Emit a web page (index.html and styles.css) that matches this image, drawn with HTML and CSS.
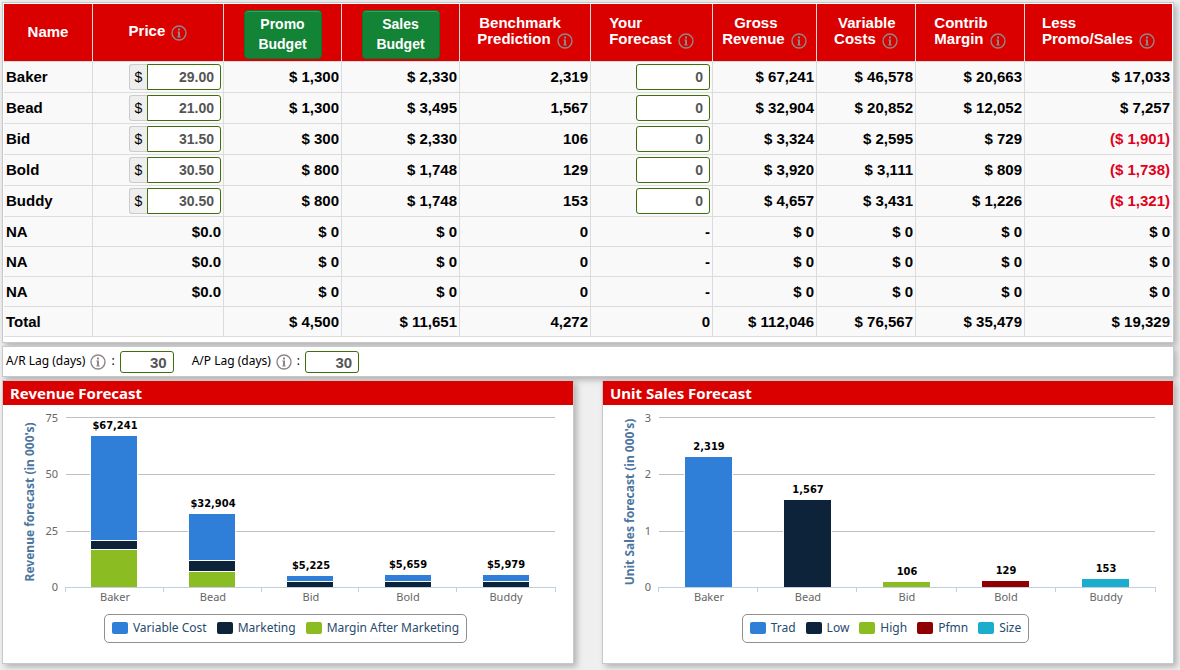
FILE: index.html
```html
<!DOCTYPE html>
<html lang="en">
<head>
<meta charset="utf-8">
<meta name="viewport" content="width=device-width, initial-scale=1">
<title>Marketing Forecast</title>
<link rel="stylesheet" href="styles.css">
</head>
<body>
<svg class="sprite" aria-hidden="true">
  <symbol id="info" viewBox="0 0 16 16">
    <circle cx="8" cy="8" r="7" fill="none" stroke="currentColor" stroke-width="1.4"/>
    <path d="M7 3.500h2v2H7zM7 6.500h2v5.500H7zM6.300 6.500H8v1H6.300zM6.300 11.500h3.400v1H6.300z" fill="currentColor"/>
  </symbol>
</svg>
<main class="page">
  <section class="panel table-panel">
    <table class="forecast">
      <colgroup>
        <col class="c-name"><col class="c-price"><col class="c-budget"><col class="c-budget"><col class="c-bench"><col class="c-your"><col class="c-gross"><col class="c-var"><col class="c-contrib"><col class="c-less">
      </colgroup>
      <thead>
        <tr>
          <th scope="col">Name</th>
          <th scope="col"><span class="label">Price <svg class="info"><use href="#info"/></svg></span></th>
          <th scope="col" class="action"><button type="button" class="btn">Promo<br>Budget</button></th>
          <th scope="col" class="action"><button type="button" class="btn">Sales<br>Budget</button></th>
          <th scope="col"><span class="label"><span class="indent-sm">Benchmark</span><br>Prediction <svg class="info"><use href="#info"/></svg></span></th>
          <th scope="col"><span class="label">Your<br>Forecast <svg class="info"><use href="#info"/></svg></span></th>
          <th scope="col"><span class="label"><span class="indent-lg">Gross</span><br>Revenue <svg class="info"><use href="#info"/></svg></span></th>
          <th scope="col"><span class="label"><span class="indent">Variable</span><br>Costs <svg class="info"><use href="#info"/></svg></span></th>
          <th scope="col"><span class="label">Contrib<br>Margin <svg class="info"><use href="#info"/></svg></span></th>
          <th scope="col"><span class="label">Less<br>Promo/Sales <svg class="info"><use href="#info"/></svg></span></th>
        </tr>
      </thead>
      <tbody>
        <tr class="product"><th scope="row">Baker</th><td><label class="money"><span class="addon">$</span><input class="field" type="text" aria-label="Baker price" value="29.00"></label></td><td>$ 1,300</td><td>$ 2,330</td><td>2,319</td><td><input class="field" type="text" aria-label="Baker forecast" value="0"></td><td>$ 67,241</td><td>$ 46,578</td><td>$ 20,663</td><td>$ 17,033</td></tr>
        <tr class="product"><th scope="row">Bead</th><td><label class="money"><span class="addon">$</span><input class="field" type="text" aria-label="Bead price" value="21.00"></label></td><td>$ 1,300</td><td>$ 3,495</td><td>1,567</td><td><input class="field" type="text" aria-label="Bead forecast" value="0"></td><td>$ 32,904</td><td>$ 20,852</td><td>$ 12,052</td><td>$ 7,257</td></tr>
        <tr class="product"><th scope="row">Bid</th><td><label class="money"><span class="addon">$</span><input class="field" type="text" aria-label="Bid price" value="31.50"></label></td><td>$ 300</td><td>$ 2,330</td><td>106</td><td><input class="field" type="text" aria-label="Bid forecast" value="0"></td><td>$ 3,324</td><td>$ 2,595</td><td>$ 729</td><td class="negative">($ 1,901)</td></tr>
        <tr class="product"><th scope="row">Bold</th><td><label class="money"><span class="addon">$</span><input class="field" type="text" aria-label="Bold price" value="30.50"></label></td><td>$ 800</td><td>$ 1,748</td><td>129</td><td><input class="field" type="text" aria-label="Bold forecast" value="0"></td><td>$ 3,920</td><td>$ 3,111</td><td>$ 809</td><td class="negative">($ 1,738)</td></tr>
        <tr class="product"><th scope="row">Buddy</th><td><label class="money"><span class="addon">$</span><input class="field" type="text" aria-label="Buddy price" value="30.50"></label></td><td>$ 800</td><td>$ 1,748</td><td>153</td><td><input class="field" type="text" aria-label="Buddy forecast" value="0"></td><td>$ 4,657</td><td>$ 3,431</td><td>$ 1,226</td><td class="negative">($ 1,321)</td></tr>
        <tr><th scope="row">NA</th><td>$0.0</td><td>$ 0</td><td>$ 0</td><td>0</td><td>-</td><td>$ 0</td><td>$ 0</td><td>$ 0</td><td>$ 0</td></tr>
        <tr><th scope="row">NA</th><td>$0.0</td><td>$ 0</td><td>$ 0</td><td>0</td><td>-</td><td>$ 0</td><td>$ 0</td><td>$ 0</td><td>$ 0</td></tr>
        <tr><th scope="row">NA</th><td>$0.0</td><td>$ 0</td><td>$ 0</td><td>0</td><td>-</td><td>$ 0</td><td>$ 0</td><td>$ 0</td><td>$ 0</td></tr>
      </tbody>
      <tfoot>
        <tr><th scope="row">Total</th><td></td><td>$ 4,500</td><td>$ 11,651</td><td>4,272</td><td>0</td><td>$ 112,046</td><td>$ 76,567</td><td>$ 35,479</td><td>$ 19,329</td></tr>
      </tfoot>
    </table>
  </section>

  <section class="panel lags">
    <div class="lag"><label for="ar">A/R Lag (days)</label><svg class="info"><use href="#info"/></svg><span>:</span><input class="field lag-field" id="ar" type="text" value="30"></div>
    <div class="lag"><label for="ap">A/P Lag (days)</label><svg class="info"><use href="#info"/></svg><span>:</span><input class="field lag-field" id="ap" type="text" value="30"></div>
  </section>

  <div class="charts">
    <section class="panel chart-panel">
      <h2 class="chart-title">Revenue Forecast</h2>
      <svg class="chart" viewBox="0 0 570 200" role="img" aria-label="Revenue forecast in thousands">
        <path class="grid" d="M63 12.5H552M63 69.5H552M63 126.5H552"/>
        <g class="bars">
          <path class="blue" d="M87.5 30.5h47v105h-47zM185.500 108.500h47v47h-47zM283.500 170.500h47v6h-47zM381.500 169.500h47v7h-47zM479.500 169.500h47v7h-47z"/>
          <path class="navy" d="M87.500 135.500h47v9h-47zM185.500 155.500h47v11h-47zM283.500 176.500h47v6h-47zM381.500 176.500h47v6h-47zM479.500 176.500h47v6h-47z"/>
          <path class="green" d="M87.500 144.500h47v38h-47zM185.500 166.500h47v16h-47z"/>
        </g>
        <path class="axis" d="M62 182.500H553M62.500 182v5M160.500 182v5M258.500 182v5M355.500 182v5M453.500 182v5M552.500 182v5"/>
        <g class="y-labels"><text x="55" y="17">75</text><text x="55" y="73">50</text><text x="55" y="130">25</text><text x="55" y="186">0</text></g>
        <g class="x-labels"><text x="112" y="196">Baker</text><text x="210" y="196">Bead</text><text x="308" y="196">Bid</text><text x="405" y="196">Bold</text><text x="503" y="196">Buddy</text></g>
        <g class="values"><text x="112" y="24">$67,241</text><text x="210" y="102">$32,904</text><text x="308" y="164">$5,225</text><text x="405" y="163">$5,659</text><text x="503" y="163">$5,979</text></g>
        <text class="y-title" transform="translate(31 97) rotate(-90)">Revenue forecast (in 000's)</text>
      </svg>
      <div class="legend-row">
        <ul class="legend">
          <li><i class="swatch blue"></i>Variable Cost</li><li><i class="swatch navy"></i>Marketing</li><li><i class="swatch green"></i>Margin After Marketing</li>
        </ul>
      </div>
    </section>

    <section class="panel chart-panel">
      <h2 class="chart-title">Unit Sales Forecast</h2>
      <svg class="chart" viewBox="0 0 570 200" role="img" aria-label="Unit sales forecast in thousands">
        <path class="grid" d="M56 12.500H552M56 69.500H552M56 126.500H552"/>
        <g class="bars">
          <path class="blue" d="M81.500 51.500h48v131h-48z"/>
          <path class="navy" d="M180.500 94.500h48v88h-48z"/>
          <path class="green" d="M279.500 176.500h48v6h-48z"/>
          <path class="maroon" d="M378.500 175.500h48v7h-48z"/>
          <path class="cyan" d="M478.500 173.500h48v9h-48z"/>
        </g>
        <path class="axis" d="M55 182.500H553M55.500 182v5M154.500 182v5M253.500 182v5M353.500 182v5M452.500 182v5M552.500 182v5"/>
        <g class="y-labels"><text x="48" y="17">3</text><text x="48" y="73">2</text><text x="48" y="130">1</text><text x="48" y="186">0</text></g>
        <g class="x-labels"><text x="106" y="196">Baker</text><text x="205" y="196">Bead</text><text x="304" y="196">Bid</text><text x="403" y="196">Bold</text><text x="503" y="196">Buddy</text></g>
        <g class="values"><text x="106" y="45">2,319</text><text x="205" y="88">1,567</text><text x="304" y="170">106</text><text x="403" y="169">129</text><text x="503" y="167">153</text></g>
        <text class="y-title" transform="translate(31 97) rotate(-90)">Unit Sales forecast (in 000's)</text>
      </svg>
      <div class="legend-row">
        <ul class="legend">
          <li><i class="swatch blue"></i>Trad</li><li><i class="swatch navy"></i>Low</li><li><i class="swatch green"></i>High</li><li><i class="swatch maroon"></i>Pfmn</li><li><i class="swatch cyan"></i>Size</li>
        </ul>
      </div>
    </section>
  </div>
</main>
</body>
</html>
```
FILE: styles.css
```css
* { box-sizing: border-box; }

body {
  margin: 0;
  background: #efefef;
  color: #000;
  font-family: "Liberation Sans", Arial, sans-serif;
}

.sprite { display: none; }

.page {
  display: flex;
  flex-direction: column;
  gap: 3px;
  padding: 2px 6px 6px 2px;
}

.panel {
  border: 1px solid #c8c8c8;
  background: #fff;
  box-shadow: 3px 3px 6px rgba(0, 0, 0, 0.25);
}

.table-panel { padding: 1px 1px 5px; }

.forecast {
  width: 100%;
  table-layout: fixed;
  border-collapse: separate;
  border-spacing: 0;
  font-size: 15px;
  font-weight: bold;
  line-height: 16px;
}

.c-name { width: 89px; }
.c-price, .c-bench { width: 131px; }
.c-budget { width: 118px; }
.c-your { width: 122px; }
.c-gross { width: 104px; }
.c-var { width: 99px; }
.c-contrib { width: 109px; }
.c-less { width: 147px; }

.forecast th,
.forecast td {
  height: 30px;
  padding: 0 2px;
  border-right: 1px solid #dcdcdc;
  border-bottom: 1px solid #dcdcdc;
  background: #f9f9f9;
  text-align: right;
  vertical-align: middle;
}

.forecast tr > :last-child { border-right: 0; }
.forecast tbody th, .forecast tfoot th { text-align: left; }
.forecast .product > * { height: 31px; }
.forecast .negative { color: #e0001b; }

.forecast thead th {
  height: 58px;
  padding-bottom: 2px;
  background: #db0000;
  color: #fff;
  text-align: center;
}

.forecast thead .action { padding: 4px 2px 0; }

.label {
  display: inline-block;
  text-align: left;
  vertical-align: middle;
}

.indent-sm { padding-left: 2px; }
.indent { padding-left: 4px; }
.indent-lg { padding-left: 12px; }

.info {
  width: 16px;
  height: 16px;
  margin-left: 2px;
  color: #8f8787;
  vertical-align: -5px;
}

.btn {
  display: block;
  width: 78px;
  margin: 0 auto;
  padding: 3px 0 4px;
  border: 1px solid #0f7430;
  border-radius: 4px;
  background: #138336;
  box-shadow: inset 0 1px 0 rgba(255, 255, 255, 0.2);
  color: #fff;
  font: bold 14px/20px "Liberation Sans", Arial, sans-serif;
}

.field {
  display: block;
  width: 74px;
  height: 26px;
  margin-left: auto;
  padding: 0 6px;
  border: 1px solid #3f6f0c;
  border-radius: 3px;
  background: #fff;
  color: #555;
  font: bold 14px/20px "Liberation Sans", Arial, sans-serif;
  text-align: right;
}

.money {
  display: flex;
  justify-content: flex-end;
}

.money .field {
  margin: 0;
  border-radius: 0 3px 3px 0;
}

.addon {
  width: 18px;
  border: 1px solid #ccc;
  border-right: 0;
  border-radius: 3px 0 0 3px;
  background: #eee;
  font-size: 14px;
  font-weight: normal;
  line-height: 24px;
  text-align: center;
}

.lags {
  display: flex;
  gap: 18px;
  padding: 4px 3px 3px;
  font-family: "Noto Sans", sans-serif;
  font-size: 12px;
  line-height: 16px;
}

.lag {
  display: flex;
  align-items: center;
  gap: 5px;
}

.lag label, .lag span { padding-bottom: 2px; }
.lag .info { margin: 0; }

.lag-field {
  width: 54px;
  height: 22px;
  font-size: 15px;
}

.charts {
  display: grid;
  grid-template-columns: 1fr 1fr;
  gap: 28px;
}

.chart-panel { padding-bottom: 20px; }

.chart-title {
  margin: 0;
  padding: 0 7px;
  background: #db0000;
  color: #fff;
  font: bold 15px/24px "Noto Sans", sans-serif;
}

.chart {
  display: block;
  width: 100%;
  font-family: "Noto Sans", sans-serif;
  font-size: 11px;
}

.grid { stroke: #c0c0c0; }
.axis { fill: none; stroke: #c0d0e0; }
.bars path { stroke: #fff; }
.y-labels { fill: #666; text-anchor: end; }
.x-labels { fill: #666; text-anchor: middle; }

.values {
  font-family: "DejaVu Sans Condensed", "DejaVu Sans", sans-serif;
  font-weight: bold;
  text-anchor: middle;
}

.y-title {
  fill: #4d759e;
  font-size: 12px;
  font-weight: bold;
  text-anchor: middle;
}

.blue { fill: #2f7ed8; background: #2f7ed8; }
.navy { fill: #0d233a; background: #0d233a; }
.green { fill: #8bbc21; background: #8bbc21; }
.maroon { fill: #910000; background: #910000; }
.cyan { fill: #1aadce; background: #1aadce; }

.legend-row {
  display: flex;
  justify-content: center;
  padding: 9px 5px 0 0;
}

.legend {
  display: flex;
  gap: 10px;
  margin: 0;
  padding: 0 7px 2px;
  border: 1px solid #909090;
  border-radius: 5px;
  color: #274b6d;
  font: 12px/25px "Noto Sans", sans-serif;
  list-style: none;
}

.legend li {
  display: flex;
  align-items: center;
  gap: 5px;
}

.swatch {
  width: 16px;
  height: 12px;
  border-radius: 2px;
}
```
